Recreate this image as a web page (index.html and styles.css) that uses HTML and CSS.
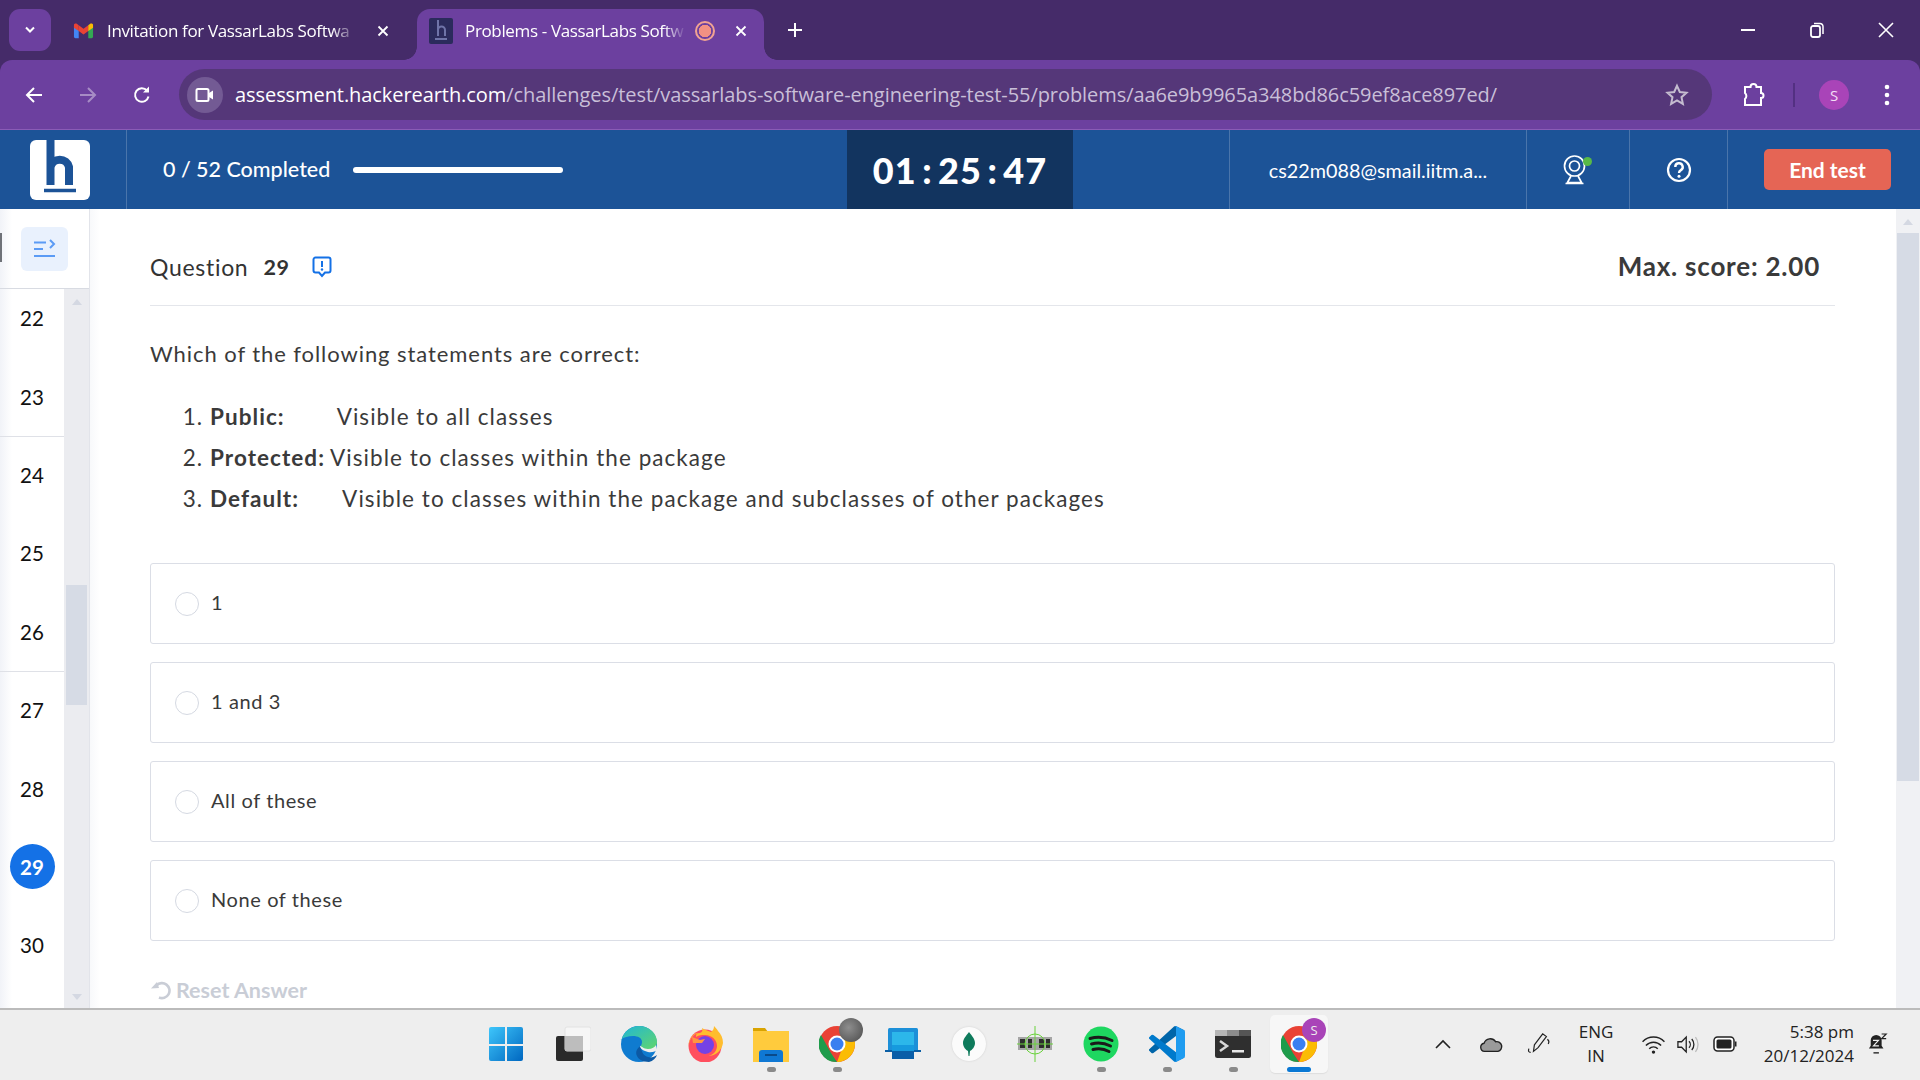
FILE: index.html
```html
<!DOCTYPE html>
<html lang="en">
<head>
<meta charset="utf-8">
<title>Problems - VassarLabs Software Engineering Test</title>
<link rel="stylesheet" href="styles.css">
</head>
<body>
<div class="screen">
  <div class="tabstrip">
    <div class="tabsearch"><svg width="12" height="8" viewBox="0 0 12 8"><path d="M2 1.500l4 4 4-4" fill="none" stroke="#fff" stroke-width="2"/></svg></div>
    <div class="tab">
      <svg class="fav" width="21" height="17" viewBox="0 0 22 17"><path d="M1 4v11a1.500 1.500 0 0 0 1.500 1.500H6V8z" fill="#4285f4"/><path d="M16 8v8.500h3.500A1.500 1.500 0 0 0 21 15V4z" fill="#34a853"/><path d="M1 2.500v3L6 9V3L4 1.500C2.800.6 1 1.300 1 2.500z" fill="#ea4335"/><path d="M6 3v6l5 3.700L16 9V3l-5 3.700z" fill="#ea4335"/><path d="M16 3v6l5-3.500v-3c0-1.200-1.800-1.900-3-1z" fill="#fbbc04"/></svg>
      <span class="tabtitle">Invitation for VassarLabs Softwa</span>
      <svg class="tabx" width="12" height="12" viewBox="0 0 12 12"><path d="M1.500 1.500l9 9m0-9l-9 9" stroke="#fff" stroke-width="1.800"/></svg>
    </div>
    <div class="tab tab-active">
      <svg class="favh" width="24" height="26" viewBox="0 0 24 26"><rect width="24" height="26" rx="2" fill="#2b2b5c"/><path d="M9 2v16M9 12a3.500 3.500 0 0 1 7 0v6M6 21h12" fill="none" stroke="#6f74a8" stroke-width="2"/></svg>
      <span class="tabtitle">Problems - VassarLabs Softw</span>
      <span class="rec"></span>
      <svg class="tabx" width="12" height="12" viewBox="0 0 12 12"><path d="M1.500 1.500l9 9m0-9l-9 9" stroke="#fff" stroke-width="1.800"/></svg>
    </div>
    <svg class="newtab" width="16" height="16" viewBox="0 0 16 16"><path d="M8 1v14M1 8h14" stroke="#fff" stroke-width="2"/></svg>
    <div class="winctl">
      <svg width="16" height="16" viewBox="0 0 16 16"><path d="M1 8h14" stroke="#fff" stroke-width="2"/></svg>
      <svg width="16" height="16" viewBox="0 0 16 16"><rect x="2" y="4" width="9" height="11" rx="2" fill="none" stroke="#fff" stroke-width="1.800"/><path d="M5 1.500h6a3 3 0 0 1 3 3V12" fill="none" stroke="#fff" stroke-width="1.500"/></svg>
      <svg width="16" height="16" viewBox="0 0 16 16"><path d="M1 1l14 14M15 1L1 15" stroke="#fff" stroke-width="1.600"/></svg>
    </div>
  </div>

  <div class="toolbar">
    <svg class="navicon" width="20" height="20" viewBox="0 0 20 20"><path d="M18 10H3M10 3l-7 7 7 7" fill="none" stroke="#fff" stroke-width="2"/></svg>
    <svg class="navicon dim" width="20" height="20" viewBox="0 0 20 20"><path d="M2 10h15M10 3l7 7-7 7" fill="none" stroke="#fff" stroke-width="2"/></svg>
    <svg class="navicon" width="20" height="20" viewBox="0 0 20 20"><path d="M16.500 11.500A6.800 6.800 0 1 1 15 5.500" fill="none" stroke="#fff" stroke-width="2"/><path d="M17 1.500v6h-6z" fill="#fff"/></svg>
    <div class="omnibox">
      <div class="camchip"><svg width="20" height="16" viewBox="0 0 20 16"><rect x="1.500" y="2" width="12" height="12" rx="1.500" fill="none" stroke="#fff" stroke-width="2"/><path d="M14 6l4-2.500v9L14 10z" fill="#fff"/></svg></div>
      <div class="url"><span class="host">assessment.hackerearth.com</span>/challenges/test/vassarlabs-software-engineering-test-55/problems/aa6e9b9965a348bd86c59ef8ace897ed/</div>
      <svg class="star" width="24" height="24" viewBox="0 0 24 24"><path d="M12 2.800l2.800 6.200 6.700.7-5 4.500 1.400 6.700-5.900-3.400-5.900 3.400 1.400-6.700-5-4.500 6.700-.7z" fill="none" stroke="#c4bccf" stroke-width="2"/></svg>
    </div>
    <svg class="ext" width="24" height="26" viewBox="0 0 24 26"><path d="M3 5h5.500a3 3 0 0 1 6 0H19v6a2.500 2.500 0 0 1 0 5v7H3v-6a4 4 0 0 0 0-6z" fill="none" stroke="#fff" stroke-width="2"/></svg>
    <span class="tsep"></span>
    <div class="avatar">S</div>
    <svg class="kebab" width="6" height="22" viewBox="0 0 6 22"><circle cx="3" cy="3" r="2.300" fill="#fff"/><circle cx="3" cy="11" r="2.300" fill="#fff"/><circle cx="3" cy="19" r="2.300" fill="#fff"/></svg>
  </div>

  <header class="apphead">
    <div class="h-logo">
      <svg class="logo" width="60" height="60" viewBox="0 0 60 60"><rect width="60" height="60" rx="6" fill="#fff"/><path d="M20.500 0v45M20.500 27a9.500 9.500 0 0 1 18.500 0v18" fill="none" stroke="#1c5397" stroke-width="8"/><path d="M14 50.500h32" stroke="#1c5397" stroke-width="3.500"/></svg>
    </div>
    <div class="h-progress">
      <span class="pcount">0 / 52 Completed</span>
      <span class="pbar"></span>
    </div>
    <div class="h-timer">01 : 25 : 47</div>
    <div class="h-cell h-email">cs22m088@smail.iitm.a...</div>
    <div class="h-cell h-cam">
      <svg width="30" height="30" viewBox="0 0 30 30"><circle cx="11.500" cy="11" r="10" fill="none" stroke="#fff" stroke-width="1.700"/><circle cx="11.500" cy="11" r="5" fill="none" stroke="#fff" stroke-width="1.700"/><path d="M8 21l-3.500 6.500h14L15 21M2.500 28.500h18" fill="none" stroke="#fff" stroke-width="1.700"/><circle cx="24.500" cy="6.500" r="4.500" fill="#58b947"/></svg>
    </div>
    <div class="h-cell h-help">
      <svg width="26" height="26" viewBox="0 0 26 26"><circle cx="13" cy="13" r="11" fill="none" stroke="#fff" stroke-width="2.200"/><path d="M9.300 10a3.700 3.700 0 1 1 5.600 3.100c-1.300.8-1.900 1.500-1.900 2.900" fill="none" stroke="#fff" stroke-width="2.400"/><circle cx="13" cy="19.300" r="1.500" fill="#fff"/></svg>
    </div>
    <div class="h-cell h-end"><button class="endbtn">End test</button></div>
  </header>

  <div class="workspace">
    <aside class="sidebar">
      <div class="side-top">
        <span class="edge-tick"></span>
        <div class="togglebtn">
          <svg width="24" height="20" viewBox="0 0 24 20"><path d="M1 3.500h12M1 10h9M1 17h21M17 1l4 4-4 4" fill="none" stroke="#5b9bf5" stroke-width="2"/></svg>
        </div>
      </div>
      <div class="side-list">
        <div class="nums">
          <div class="num">22</div>
          <div class="num num-line">23</div>
          <div class="num">24</div>
          <div class="num">25</div>
          <div class="num num-line">26</div>
          <div class="num">27</div>
          <div class="num">28</div>
          <div class="num"><span class="cur">29</span></div>
          <div class="num">30</div>
        </div>
        <div class="side-scroll">
          <span class="arrow-up"></span>
          <span class="thumb thumb-side"></span>
          <span class="arrow-down"></span>
        </div>
      </div>
    </aside>

    <main class="content">
      <div class="qhead">
        <div class="qlabel">Question <b>29</b>
          <svg width="20" height="22" viewBox="0 0 20 22"><path d="M3.500 1.500h13a2 2 0 0 1 2 2v11a2 2 0 0 1-2 2H13l-3 3.500-3-3.500H3.500a2 2 0 0 1-2-2v-11a2 2 0 0 1 2-2z" fill="none" stroke="#1471e6" stroke-width="2"/><path d="M10 5v6" stroke="#1471e6" stroke-width="2"/><circle cx="10" cy="13.500" r="1.200" fill="#1471e6"/></svg>
        </div>
        <div class="qscore">Max. score: 2.00</div>
      </div>
      <p class="qtext">Which of the following statements are correct:</p>
      <ol class="qlist">
        <li><b>Public:</b><span class="gap1"></span>Visible to all classes</li>
        <li><b>Protected:</b><span class="gap2"></span>Visible to classes within the package</li>
        <li><b>Default:</b><span class="gap3"></span>Visible to classes within the package and subclasses of other packages</li>
      </ol>
      <div class="options">
        <div class="opt"><span class="radio"></span><span class="optlabel">1</span></div>
        <div class="opt"><span class="radio"></span><span class="optlabel">1 and 3</span></div>
        <div class="opt"><span class="radio"></span><span class="optlabel">All of these</span></div>
        <div class="opt"><span class="radio"></span><span class="optlabel">None of these</span></div>
      </div>
      <div class="reset">
        <svg width="22" height="20" viewBox="0 0 22 20"><path d="M6.500 5.500A7.500 7.500 0 1 1 9 17.500" fill="none" stroke="#c9cdd6" stroke-width="2.600"/><path d="M1 8.500l8-.5-2-6z" fill="#c9cdd6"/></svg>
        <span>Reset Answer</span>
      </div>
    </main>

    <div class="main-scroll">
      <span class="arrow-up"></span>
      <span class="thumb thumb-main"></span>
    </div>
  </div>

  <footer class="taskbar">
    <div class="tb-icons">
      <div class="tb-item"><svg class="tb-win" width="36" height="36" viewBox="0 0 36 36"><defs><linearGradient id="w" x1="0" y1="0" x2="1" y2="1"><stop offset="0" stop-color="#3ec6fb"/><stop offset="1" stop-color="#0067c0"/></linearGradient></defs><path d="M1 3a2 2 0 0 1 2-2h14v17H1zM19 1h14a2 2 0 0 1 2 2v15H19zM1 20h16v15H3a2 2 0 0 1-2-2zM19 20h16v13a2 2 0 0 1-2 2H19z" fill="url(#w)"/></svg></div>
      <div class="tb-item"><svg width="36" height="36" viewBox="0 0 36 36"><rect x="1" y="10" width="27" height="25" rx="2" fill="#2a2a2a"/><rect x="10" y="1" width="26" height="24" rx="2" fill="#f6f6f6" stroke="#e2e2e2"/><rect x="10" y="10" width="18" height="15" fill="#bdbdbd"/></svg></div>
      <div class="tb-item"><svg width="38" height="38" viewBox="0 0 38 38"><defs><linearGradient id="e" x1="0" y1="0" x2="1" y2="1"><stop offset="0" stop-color="#1fb6d8"/><stop offset="1" stop-color="#62d66a"/></linearGradient></defs><circle cx="19" cy="19" r="18" fill="#0f7bd0"/><path d="M1.500 15C4 6 11 1 19 1c10 0 18 7 18 16 0 5-4 8-9 8-4 0-7-2-7-4 0-1 1-2 1-4 0-4-4-6-9-6-5 0-9 1-12.500 4z" fill="url(#e)"/><path d="M21 21c-4 2-6 6-4 10 1 3 6 6 12 6 4-1 7-4 8-7-3 2-6 3-9 2-4-1-7-5-7-11z" fill="#0c59a4"/><path d="M20 21c0-1 3 3 8 3 4 0 7-2 8-4l1 5c-1 1-5 3-9 2-4-1-8-3-8-6z" fill="#eeeeee"/></svg></div>
      <div class="tb-item"><svg width="36" height="36" viewBox="0 0 36 36"><circle cx="18" cy="20" r="16.500" fill="#ff4f5e"/><path d="M1.500 20C2 12 6 8 10 7c-1 2-1 3-1 4 3-2 6-2 9-2 7 0 12 5 12 11 0 4-3 9-9 10 8 0 14-6 15-13 0-5-2-9-5-12-1-2-3-4-4-5 0 3-1 4-3 6C20 5 17 3 15 2c1 3 0 4-2 5-6 0-10 5-11.500 13z" fill="#ffbd2e"/><circle cx="18" cy="19" r="9" fill="#7542e5"/><path d="M5 11l8 3 5-1-3 4H6z" fill="#ff9640"/></svg></div>
      <div class="tb-item tb-run"><svg width="36" height="36" viewBox="0 0 36 36"><path d="M0 2h12l3 4h21v30H0z" fill="#d9a300"/><rect y="5" width="36" height="31" fill="#ffcb3d"/><path d="M6 36v-9a3 3 0 0 1 3-3h18a3 3 0 0 1 3 3v9z" fill="#0f78d4"/><rect x="12" y="28" width="12" height="2" fill="#0a4a8a"/></svg></div>
      <div class="tb-item tb-run"><svg width="36" height="36" viewBox="0 0 36 36"><circle cx="18" cy="18" r="18" fill="#e94235"/><path d="M18 36A18 18 0 0 1 2 9l10 18z" fill="#1e9c4b"/><path d="M18 36c10 0 18-8 18-18 0-3-1-5-2-8H18l6 10z" fill="#fbbc04"/><circle cx="18" cy="18" r="8.500" fill="#fff"/><circle cx="18" cy="18" r="6.500" fill="#3a7ff0"/></svg><span class="tb-badge moon"></span></div>
      <div class="tb-item"><svg width="36" height="32" viewBox="0 0 36 32"><rect x="3" y="0" width="30" height="24" rx="1.500" fill="#1c8fd8"/><rect x="0" y="22" width="36" height="2" fill="#0b5fa5"/><rect x="7" y="4" width="22" height="13" fill="#2cb7ea"/><rect x="7" y="17" width="22" height="6" fill="#169ade"/><rect x="7" y="24" width="22" height="7" fill="#0a5ea8"/></svg></div>
      <div class="tb-item"><span class="mongo"><svg width="12" height="24" viewBox="0 0 12 24"><path d="M6 0c3 4 6 7 6 11s-3 7-5 8l-.5 5h-1L5 19c-2-1-5-4-5-8s3-7 6-11z" fill="#0e7a5b"/></svg></span></div>
      <div class="tb-item"><svg width="36" height="36" viewBox="0 0 36 36"><rect x="1" y="11" width="34" height="13" fill="#a5a5a5"/><path d="M3 13h5v9H3zM11 13h4v9h-4zM22 13h5v9h-5zM29 13h4v9h-4z" fill="#2d2d2d"/><circle cx="18" cy="18" r="10" fill="none" stroke="#69d23a"/><path d="M18 0v36M0 18h36" stroke="#69d23a"/></svg></div>
      <div class="tb-item tb-run"><svg width="36" height="36" viewBox="0 0 36 36"><circle cx="18" cy="18" r="17.500" fill="#1ed760"/><path d="M7 12.500c7-2 15-1.500 22 2M8.500 18c6-1.500 13-1 19 2M10 23.500c5-1.200 11-.8 16 2" fill="none" stroke="#1a1a1a" stroke-width="3" stroke-linecap="round"/></svg></div>
      <div class="tb-item tb-run"><svg width="36" height="36" viewBox="0 0 100 100"><path d="M96.500 10.800L75.900.9a6.200 6.200 0 0 0-7.100 1.200L1.400 63.600a4.200 4.200 0 0 0 0 6.100l5.500 5a4.200 4.200 0 0 0 5.300.2L93.400 14.200a4.100 4.100 0 0 1 6.600 3.300v-.2a6.200 6.200 0 0 0-3.500-6.500z" fill="#0065a9"/><path d="M96.500 89.200L75.900 99.100a6.200 6.200 0 0 1-7.100-1.200L1.400 36.400a4.200 4.200 0 0 1 0-6.100l5.500-5a4.200 4.200 0 0 1 5.300-.2l81.200 61.600a4.100 4.100 0 0 0 6.600-3.300v.2a6.200 6.200 0 0 1-3.500 5.600z" fill="#007acc"/><path d="M75.900 99.100a6.200 6.200 0 0 1-7.100-1.200c2.300 2.300 6.200.7 6.200-2.600V4.700c0-3.300-3.900-4.900-6.200-2.600a6.200 6.200 0 0 1 7.100-1.200l20.600 9.900a6.200 6.200 0 0 1 3.500 5.600v67.200a6.200 6.200 0 0 1-3.500 5.600z" fill="#1f9cf0"/></svg></div>
      <div class="tb-item tb-run"><svg width="36" height="28" viewBox="0 0 36 28"><rect width="36" height="28" rx="2.500" fill="#2f2f2f"/><rect width="12" height="6" fill="#b5b5b5"/><rect x="12" width="12" height="6" fill="#8c8c8c"/><rect x="24" width="12" height="6" fill="#555"/><path d="M5 11l7 5-7 5" fill="none" stroke="#d8d8d8" stroke-width="2.500"/><rect x="17" y="20" width="12" height="2.500" fill="#e8e8e8"/></svg></div>
      <div class="tb-item tb-active"><svg class="tb-chrome2" width="36" height="36" viewBox="0 0 36 36"><circle cx="18" cy="18" r="18" fill="#e94235"/><path d="M18 36A18 18 0 0 1 2 9l10 18z" fill="#1e9c4b"/><path d="M18 36c10 0 18-8 18-18 0-3-1-5-2-8H18l6 10z" fill="#fbbc04"/><circle cx="18" cy="18" r="8.500" fill="#fff"/><circle cx="18" cy="18" r="6.500" fill="#3a7ff0"/></svg><span class="tb-badge sbadge">S</span></div>
    </div>
    <div class="tray">
      <svg width="18" height="12" viewBox="0 0 18 12"><path d="M2 10l7-7 7 7" fill="none" stroke="#222" stroke-width="1.600"/></svg>
      <svg class="tray-cloud" width="24" height="17" viewBox="0 0 26 18"><path d="M6 16.500A4.500 4.500 0 0 1 5.500 7.600 7 7 0 0 1 18 6a5.300 5.300 0 0 1 2.500 10.500z" fill="#9a9a9a" stroke="#222" stroke-width="1.500"/></svg>
      <svg class="tray-pen" width="24" height="24" viewBox="0 0 26 26"><path d="M8 14l9-12 4 3-9 12-5 4zM2 18c-1 3 0 4 2 4M22 8c2 1 2 3 1 5" fill="none" stroke="#222" stroke-width="1.300"/></svg>
      <div class="lang"><span>ENG</span><span>IN</span></div>
      <svg class="tray-wifi" width="25" height="19" viewBox="0 0 26 20"><path d="M1.500 7a16 16 0 0 1 23 0M5 11a11 11 0 0 1 16 0M8.500 14.500a6 6 0 0 1 9 0" fill="none" stroke="#222" stroke-width="1.500"/><circle cx="13" cy="18" r="1.800" fill="#222"/></svg>
      <svg class="tray-vol" width="24" height="19" viewBox="0 0 26 20"><path d="M1 7v6h4l5 5V2L5 7z" fill="none" stroke="#222" stroke-width="1.400"/><path d="M13 6.500a5 5 0 0 1 0 7M16 4a9 9 0 0 1 0 12" fill="none" stroke="#222" stroke-width="1.400"/><path d="M20 2a13 13 0 0 1 0 16" fill="none" stroke="#bbb" stroke-width="1.400"/></svg>
      <svg class="tray-bat" width="24" height="16" viewBox="0 0 24 16"><rect x="1" y="1" width="20" height="14" rx="3.500" fill="#fff" stroke="#222" stroke-width="1.500"/><rect x="3.500" y="3.500" width="15" height="9" rx="1.500" fill="#222"/><path d="M22 5.500h1.500v5H22z" fill="#222"/></svg>
      <div class="clock"><span>5:38 pm</span><span>20/12/2024</span></div>
      <svg class="tray-bell" width="20" height="22" viewBox="0 0 22 24"><path d="M9 2a6 6 0 0 0-6 6v6l-2 3h16l-2-3V8a6 6 0 0 0-6-6z" fill="#222"/><path d="M6 21h6v1.500H6z" fill="#222"/><path d="M5.500 8h6L6 14h6" fill="none" stroke="#eee" stroke-width="1.300"/><path d="M15 1h5l-5 5h5" fill="none" stroke="#222" stroke-width="1.300"/></svg>
    </div>
  </footer>
</div>
</body>
</html>
```
FILE: styles.css
```css
* { box-sizing: border-box; }
html, body { margin: 0; padding: 0; height: 100%; overflow: hidden; }
body { font-family: "Lato", "Liberation Sans", sans-serif; color: #333; background: #fff; }
.screen { width: 1920px; height: 1080px; display: flex; flex-direction: column; background: #452b69; }

.tabstrip { height: 60px; background: #452b69; display: flex; align-items: flex-start; padding: 9px 0 0 9px; flex: none; font-family: "Open Sans", sans-serif; }
.tabsearch { width: 42px; height: 42px; border-radius: 11px; background: #6c409f; display: flex; align-items: center; justify-content: center; flex: none; }
.tab { width: 366px; height: 51px; display: flex; align-items: center; padding: 0 0 8px 22px; color: #fff; font-size: 17px; flex: none; position: relative; }
.tab-active { background: #6c409f; border-radius: 13px 13px 0 0; width: 347px; padding-left: 12px; }
.tab-active::before, .tab-active::after { content: ""; position: absolute; bottom: 0; width: 13px; height: 13px; }
.tab-active::before { left: -13px; background: radial-gradient(circle at 0 0, transparent 12.500px, #6c409f 13px); }
.tab-active::after { right: -13px; background: radial-gradient(circle at 100% 0, transparent 12.500px, #6c409f 13px); }
.fav { flex: none; margin-right: 13px; }
.tabtitle { white-space: nowrap; flex: none; letter-spacing: -0.35px; -webkit-mask-image: linear-gradient(90deg, #000 90%, transparent); mask-image: linear-gradient(90deg, #000 90%, transparent); }
.tab .tabtitle { width: 250px; }
.tab-active .tabtitle { width: 221px; }
.tabx { flex: none; margin-left: 20px; }
.favh { flex: none; margin-right: 12px; }
.rec { width: 20px; height: 20px; border-radius: 50%; border: 2px solid #f1a392; background: radial-gradient(circle, #f29183 0 6px, transparent 6.500px); flex: none; margin-left: 9px; }
.newtab { flex: none; margin: 13px 0 0 23px; }
.winctl { margin-left: auto; display: flex; gap: 53px; padding: 13px 26px 0 0; }

.toolbar { height: 69px; background: #6c409f; border-radius: 12px 12px 0 0; display: flex; align-items: center; padding: 0 0 0 24px; flex: none; }
.navicon { flex: none; margin-right: 34px; }
.navicon.dim { opacity: .4; }
.omnibox { flex: none; width: 1533px; height: 51px; margin-left: -7px; background: #553779; border-radius: 26px; display: flex; align-items: center; padding: 0 23px 0 8px; }
.camchip { width: 36px; height: 36px; border-radius: 50%; background: #735a94; display: flex; align-items: center; justify-content: center; flex: none; }
.url { margin-left: 12px; flex: 1; font-family: "Open Sans", sans-serif; font-size: 20px; letter-spacing: -0.07px; color: #c9bfd8; white-space: nowrap; overflow: hidden; }
.host { color: #fff; }
.star { flex: none; }
.ext { flex: none; margin-left: 30px; }
.tsep { width: 2px; height: 24px; background: #533082; margin-left: 27px; flex: none; }
.avatar { width: 30px; height: 30px; border-radius: 50%; background: #a944b8; color: #f3dff5; font-family: "Open Sans", sans-serif; font-size: 15px; display: flex; align-items: center; justify-content: center; margin-left: 24px; flex: none; }
.kebab { margin-left: 35px; flex: none; }

.apphead { height: 80px; background: #1c5397; border-top: 1px solid #8a5cb6; display: flex; color: #fff; flex: none; }
.h-logo { width: 127px; border-right: 1px solid #4a75ab; display: flex; align-items: center; padding-left: 30px; flex: none; }
.logo { display: block; }
.h-progress { width: 720px; display: flex; align-items: center; padding-left: 36px; flex: none; }
.pcount { font-size: 21.500px; font-weight: 500; white-space: nowrap; margin-top: -2px; }
.pbar { width: 210px; height: 6px; border-radius: 3px; background: #fff; margin-left: 23px; }
.h-timer { width: 226px; background: #12345f; font-size: 36px; font-weight: 900; display: flex; align-items: center; justify-content: center; word-spacing: -4px; letter-spacing: 1px; flex: none; }
.h-cell { display: flex; align-items: center; justify-content: center; border-left: 1px solid #4a75ab; flex: none; }
.h-email { margin-left: 156px; width: 297px; font-size: 19.800px; }
.h-cam { width: 103px; }
.h-help { width: 98px; }
.h-end { width: 193px; justify-content: flex-start; padding-left: 36px; }
.endbtn { width: 127px; height: 41px; border: 0; border-radius: 5px; background: #e56555; color: #fff; font-family: "Lato", sans-serif; font-weight: 700; font-size: 21px; padding: 0; }

.workspace { flex: 1; min-height: 0; display: flex; overflow: hidden; background: #fff; }
.sidebar { width: 90px; display: flex; flex-direction: column; flex: none; border-right: 1px solid #e2e4ea; background: linear-gradient(90deg, #f1f3f8, #fff 12px); }
.side-top { height: 80px; display: flex; align-items: center; padding-left: 21px; border-bottom: 1px solid #d8dbe2; flex: none; position: relative; }
.edge-tick { position: absolute; left: 0; top: 24px; width: 2px; height: 29px; background: #6f7278; }
.togglebtn { width: 47px; height: 44px; border-radius: 6px; background: #e9f1fd; display: flex; align-items: center; justify-content: center; }
.side-list { flex: 1; min-height: 0; display: flex; }
.nums { width: 64px; flex: none; overflow: hidden; }
.num { height: 78.400px; display: flex; align-items: center; justify-content: center; font-size: 20.500px; color: #111; }
.num:first-child { margin-top: -10px; }
.num-line { box-shadow: 0 1px 0 #dfe1e7; }
.cur { width: 45px; height: 45px; border-radius: 50%; background: #1471e6; color: #fff; display: flex; align-items: center; justify-content: center; font-weight: 700; }
.side-scroll { width: 25px; background: #ebecf0; display: flex; flex-direction: column; align-items: center; position: relative; padding-top: 10px; }
.arrow-up { width: 0; height: 0; border-left: 5px solid transparent; border-right: 5px solid transparent; border-bottom: 6px solid #d4d8e2; flex: none; }
.arrow-down { width: 0; height: 0; border-left: 5px solid transparent; border-right: 5px solid transparent; border-top: 6px solid #d4d8e2; position: absolute; bottom: 8px; }
.thumb { display: block; background: #d6dbe5; flex: none; }
.thumb-side { width: 21px; height: 120px; margin-top: 280px; }

.content { flex: 1; min-width: 0; padding: 0 61px 0 60px; overflow: hidden; background: linear-gradient(90deg, #f8f9fb, #fff 10px); }
.qhead { height: 97px; display: flex; align-items: flex-end; justify-content: space-between; border-bottom: 1px solid #e4e6eb; padding: 0 15px 24px 0; }
.qlabel { font-size: 23px; display: flex; align-items: center; gap: 15px; color: #333; letter-spacing: .7px; }
.qlabel b { font-size: 21.500px; margin-right: 7px; }
.qscore { font-size: 26px; font-weight: 700; color: #3a3a3a; letter-spacing: .78px; margin-bottom: -1px; }
.qtext { font-size: 22px; margin: 32px 0 0; line-height: 32px; letter-spacing: .93px; color: #3a3a3a; }
.qlist { margin: 26px 0 0; padding: 0 0 0 60px; font-size: 22.500px; line-height: 41px; letter-spacing: 1.05px; color: #3a3a3a; }
.gap1, .gap2, .gap3 { display: inline-block; }
.gap1 { width: 52px; }
.gap2 { width: 5px; }
.gap3 { width: 43px; }
.options { display: flex; flex-direction: column; gap: 18px; margin-top: 44px; }
.opt { height: 81px; border: 1px solid #dbdee6; border-radius: 3px; display: flex; align-items: center; padding-left: 24px; gap: 12px; font-size: 20px; letter-spacing: .6px; color: #3a3a3a; }
.optlabel { margin-top: -3px; }
.radio { width: 24px; height: 24px; border: 1px solid #d5d9e2; border-radius: 50%; flex: none; }
.reset { display: flex; align-items: center; gap: 4px; margin-top: 36px; color: #c9cdd6; font-weight: 700; font-size: 21.500px; }

.main-scroll { width: 24px; background: #f0f1f4; display: flex; flex-direction: column; align-items: center; padding-top: 10px; flex: none; }
.thumb-main { width: 22px; height: 548px; margin-top: 8px; }

.taskbar { height: 72px; background: #eeeeee; border-top: 2px solid #bbbbbb; display: flex; align-items: center; flex: none; font-family: "Open Sans", sans-serif; color: #222; padding: 0 32px 2px 474px; }
.tb-icons { display: flex; }
.tb-item { width: 66px; height: 58px; display: flex; align-items: center; justify-content: center; position: relative; }
.tb-win { margin-left: -3px; }
.tb-run::after { content: ""; position: absolute; bottom: 1px; left: 29px; width: 9px; height: 5px; border-radius: 3px; background: #8a8a8a; }
.tb-active { background: #f7f7f7; border-radius: 5px; box-shadow: 0 1px 1px #ddd; width: 58px; margin-left: 4px; }
.tb-active::after { content: ""; position: absolute; bottom: 1px; left: 17px; width: 24px; height: 5px; border-radius: 3px; background: #0a78d4; }
.tb-badge { position: absolute; width: 24px; height: 24px; border-radius: 50%; top: 3px; right: 7px; }
.moon { background: radial-gradient(circle at 40% 40%, #8e8e8e, #4a4a4a); }
.sbadge { background: #a944b8; color: #eee; font-size: 13px; display: flex; align-items: center; justify-content: center; right: 2px; }
.mongo { width: 34px; height: 34px; border-radius: 50%; background: #fbfbfb; display: flex; align-items: center; justify-content: center; box-shadow: 0 0 2px #ccc; }
.tray { margin-left: auto; display: flex; align-items: center; font-size: 17px; }
.tray-cloud { margin-left: 27px; }
.tray-pen { margin-left: 24px; }
.lang { width: 44px; margin-left: 23px; display: flex; flex-direction: column; align-items: center; line-height: 24px; }
.tray-wifi { margin-left: 23px; }
.tray-vol { margin-left: 11px; }
.tray-bat { margin-left: 12px; }
.clock { width: 117px; display: flex; flex-direction: column; align-items: flex-end; line-height: 24px; }
.tray-bell { margin-left: 14px; }
```
